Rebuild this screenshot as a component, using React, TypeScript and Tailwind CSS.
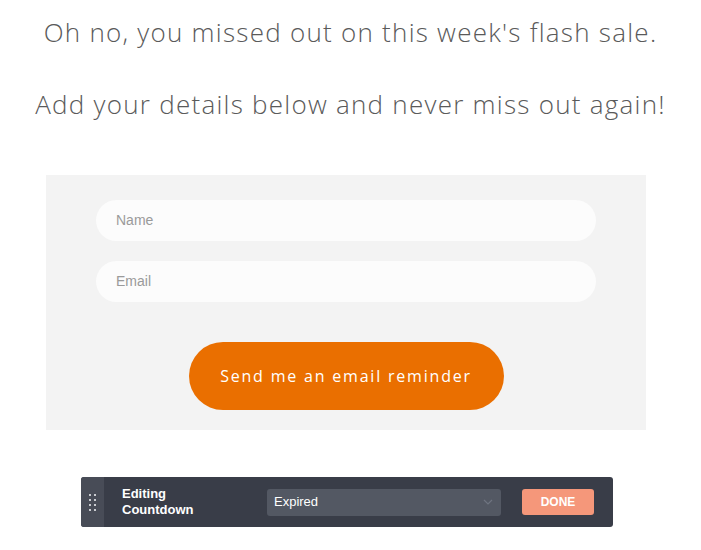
const App = () => {
  return (
    <div className="w-[701px] h-[550px] bg-white relative font-['Open_Sans',sans-serif]">
      <div className="pt-[15px] text-center text-[#5a5a5a] text-[26px] leading-[34px] font-light tracking-[1.25px]">
        <p>Oh no, you missed out on this week's flash sale.</p>
        <p className="mt-[38px]">Add your details below and never miss out again!</p>
      </div>

      <div className="mt-[54px] ml-[46px] w-[600px] h-[255px] bg-[#f3f3f3] flex flex-col items-center pt-[25px]">
        <div className="w-[500px] h-[41px] rounded-full bg-[#fcfcfc] flex items-center px-5 text-[14px] text-[#9a9a9a] font-['Liberation_Sans',sans-serif]">
          Name
        </div>
        <div className="mt-5 w-[500px] h-[41px] rounded-full bg-[#fcfcfc] flex items-center px-5 text-[14px] text-[#9a9a9a] font-['Liberation_Sans',sans-serif]">
          Email
        </div>
        <button className="mt-10 w-[315px] h-[68px] rounded-full bg-[#ea6f00] text-white text-[16px] tracking-[1.8px]">
          Send me an email reminder
        </button>
      </div>

      <div className="mt-[47px] ml-[81px] w-[532px] h-[50px] bg-[#393d48] rounded-[3px] flex items-center font-['Liberation_Sans',sans-serif]">
        <div className="w-[23px] h-full bg-[#484c57] rounded-l-[3px] flex items-center justify-center">
          <div className="grid grid-cols-2 gap-x-[3px] gap-y-[3px]">
            {Array.from({ length: 8 }).map((_, i) => (
              <span key={i} className="w-[2px] h-[2px] bg-[#c9cbd0]" />
            ))}
          </div>
        </div>
        <div className="ml-[18px] w-[145px] text-white text-[13px] font-bold leading-[16px]">
          Editing
          <br />
          Countdown
        </div>
        <div className="w-[234px] h-[27px] rounded-[3px] bg-[#535863] flex items-center justify-between pl-[7px] pr-[8px] text-white text-[13px]">
          <span>Expired</span>
          <svg width="10" height="6" viewBox="0 0 10 6" fill="none">
            <path d="M1 1l4 4 4-4" stroke="#6f7480" strokeWidth="1.2" />
          </svg>
        </div>
        <button className="ml-[21px] w-[72px] h-[26px] rounded-[3px] bg-[#f5977a] text-white text-[12px] font-bold">
          DONE
        </button>
      </div>
    </div>
  );
};

export default App;
